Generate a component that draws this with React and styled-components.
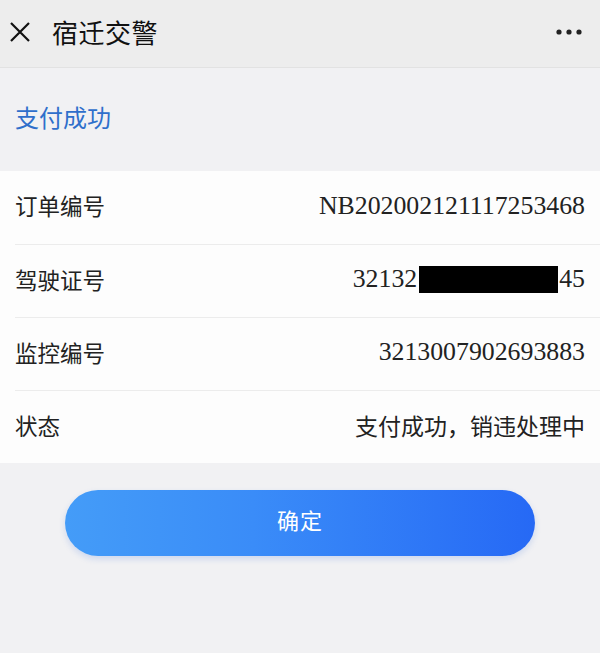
import React from "react";
import styled, { createGlobalStyle } from "styled-components";

const Global = createGlobalStyle`
  html, body { margin: 0; padding: 0; background: #f1f1f3; }
  body { font-family: "Noto Sans CJK SC", "Noto Sans", sans-serif; }
`;

const Page = styled.div`
  width: 600px;
  min-height: 653px;
  background: #f1f1f3;
  display: flex;
  flex-direction: column;
`;

const TopBar = styled.header`
  height: 68px;
  background: #ededed;
  border-bottom: 1px solid #e2e2e2;
  display: flex;
  align-items: center;
  padding: 0 18px 4px 9px;
  box-sizing: border-box;
`;

const Title = styled.h1`
  margin: 0 0 0 21px;
  font-size: 26px;
  line-height: 1;
  font-weight: 400;
  color: #111;
  flex: 1;
  letter-spacing: 0.5px;
`;

const IconBtn = styled.span`
  display: flex;
  align-items: center;
  justify-content: center;
`;

const StatusBlock = styled.div`
  height: 103px;
  display: flex;
  align-items: center;
  padding: 0 15px 6px;
  box-sizing: border-box;
  color: #2f6fcb;
  font-size: 24px;
  line-height: 1;
`;

const Card = styled.section`
  background: #fdfdfd;
  display: flex;
  flex-direction: column;
`;

const Row = styled.div`
  height: 73px;
  margin-left: 15px;
  padding: 0 15px 4px 0;
  display: flex;
  align-items: center;
  justify-content: space-between;
  border-top: ${(p) => (p.$first ? "none" : "1px solid #ececec")};
  box-sizing: border-box;
`;

const Label = styled.span`
  font-size: 22.5px;
  line-height: 1;
  color: #222;
`;

const Value = styled.span`
  font-size: ${(p) => (p.$serif ? "25.8px" : "23px")};
  line-height: 1;
  font-family: ${(p) =>
    p.$serif
      ? `"Liberation Serif", "Noto Sans CJK SC", serif`
      : `"Noto Sans CJK SC", sans-serif`};
  color: #222;
  display: flex;
  align-items: center;
`;

const Mask = styled.span`
  display: inline-block;
  width: 139px;
  height: 27px;
  background: #000;
  margin: 0 1px 0 2px;
`;

const ButtonWrap = styled.div`
  display: flex;
  justify-content: center;
  padding-top: 27px;
`;

const Confirm = styled.button`
  width: 470px;
  height: 66px;
  border: none;
  border-radius: 33px;
  background: linear-gradient(90deg, #449cf8 0%, #3a8cf8 40%, #2669f5 100%);
  color: #fff;
  font-size: 22px;
  line-height: 1;
  padding: 0 0 8px;
  font-family: "Noto Sans CJK SC", sans-serif;
  box-shadow: 0 3px 6px rgba(40, 100, 220, 0.18);
  letter-spacing: 1px;
`;

export default function App() {
  return (
    <Page>
      <Global />
      <TopBar>
        <IconBtn>
          <svg width="22" height="22" viewBox="0 0 22 22">
            <path d="M2 2 L20 20 M20 2 L2 20" stroke="#111" strokeWidth="2.2" fill="none" />
          </svg>
        </IconBtn>
        <Title>宿迁交警</Title>
        <IconBtn>
          <svg width="26" height="6" viewBox="0 0 26 6">
            <circle cx="3" cy="3" r="2.6" fill="#222" />
            <circle cx="13" cy="3" r="2.6" fill="#222" />
            <circle cx="23" cy="3" r="2.6" fill="#222" />
          </svg>
        </IconBtn>
      </TopBar>
      <StatusBlock>支付成功</StatusBlock>
      <Card>
        <Row $first>
          <Label>订单编号</Label>
          <Value $serif>NB202002121117253468</Value>
        </Row>
        <Row>
          <Label>驾驶证号</Label>
          <Value $serif>
            32132<Mask />45
          </Value>
        </Row>
        <Row>
          <Label>监控编号</Label>
          <Value $serif>3213007902693883</Value>
        </Row>
        <Row>
          <Label>状态</Label>
          <Value>支付成功，销违处理中</Value>
        </Row>
      </Card>
      <ButtonWrap>
        <Confirm>确定</Confirm>
      </ButtonWrap>
    </Page>
  );
}
